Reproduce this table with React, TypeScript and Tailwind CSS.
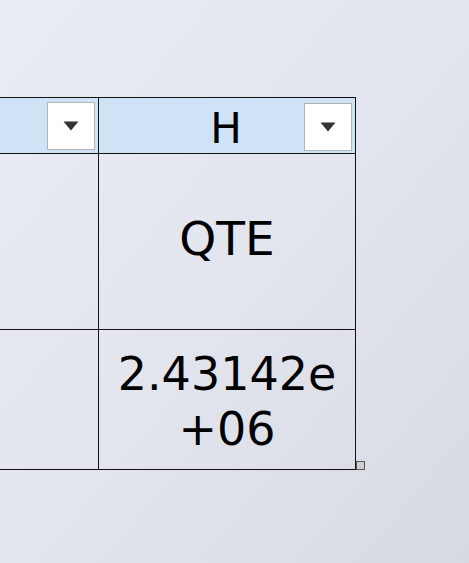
function Caret() {
  return (
    <div className="flex h-[48px] w-[48px] items-center justify-center border border-[#b4b4b4] bg-white">
      <svg width="16" height="10" viewBox="0 0 16 10">
        <path d="M0.5 0.5h15L8 9.5z" fill="#333" />
      </svg>
    </div>
  );
}

export default function App() {
  return (
    <div
      className="h-[563px] w-[469px] overflow-hidden bg-gradient-to-br from-[#eaedf4] via-[#e2e5ed] to-[#d7dae3] pt-[97px] text-black"
      style={{ fontFamily: '"DejaVu Sans", sans-serif' }}
    >
      <div className="relative ml-[-45px] w-[401px] border border-[#111]">
        {/* header row */}
        <div className="flex h-[56px] border-b border-[#111] bg-[#cfe2f6]">
          <div className="flex w-[143px] items-center justify-end border-r border-[#111] pr-[3px]">
            <Caret />
          </div>
          <div className="relative flex flex-1 items-center justify-center pt-[6px]">
            <span className="pr-[2px] text-[42px] leading-none">H</span>
            <div className="absolute right-[3px] top-[5px]">
              <Caret />
            </div>
          </div>
        </div>

        <div className="flex h-[176px] border-b border-[#111]">
          <div className="w-[143px] border-r border-[#111]" />
          <div className="flex flex-1 items-center justify-center pb-[6px] text-[47px] leading-none">
            QTE
          </div>
        </div>

        <div className="flex h-[139px]">
          <div className="w-[143px] border-r border-[#111]" />
          <div className="flex flex-1 flex-col items-center justify-center pt-[4px] text-[46px] leading-[55px]">
            <span>2.43142e</span>
            <span>+06</span>
          </div>
        </div>

        <div className="absolute bottom-[-1px] right-[-10px] h-[9px] w-[9px] border border-[#555] bg-[#cfcfcf]" />
      </div>
    </div>
  );
}
